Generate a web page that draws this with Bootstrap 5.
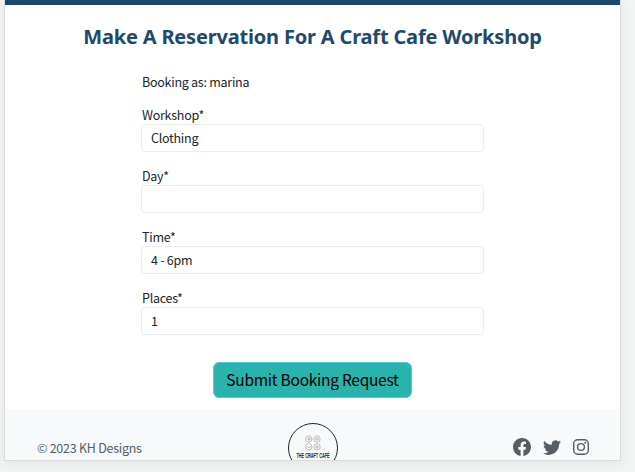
<!DOCTYPE html>
<html lang="en">
<head>
<meta charset="utf-8">
<meta name="viewport" content="width=device-width, initial-scale=1">
<title>Craft Cafe Reservation</title>
<link href="https://cdn.jsdelivr.net/npm/bootstrap@5.3.0/dist/css/bootstrap.min.css" rel="stylesheet">
<style>
body{height:472px;background:#f3f4f4;font-family:"Noto Sans CJK SC",sans-serif;font-size:12.5px;letter-spacing:-.26px;line-height:20px;color:#212529;padding:0 14px 11px 4px}
.page-frame{height:461px;background:#fff;border:1px solid #d9dbdc;border-top:0;box-shadow:0 2px 14px rgba(0,0,0,.07)}
.top-strip{height:5px;background:#1d4a6b}
.page-title{font-family:"Noto Sans",sans-serif;font-size:20px;line-height:28px;font-weight:700;color:#1d4a6b;margin:18px 0 0;white-space:nowrap;letter-spacing:-.18px}
.booking-form{width:343px;margin:21px 0 0 136px}
.booking-as{margin-bottom:13px;padding-left:1px}
.booking-form .form-label{margin:0;line-height:19px;height:19px;padding-left:1px}
.booking-form .form-control{height:28px;font-size:12.5px;letter-spacing:-.26px;line-height:18px;padding:3px 9px 5px;border-color:#ebecef;border-radius:4px;color:#212529}
.field-row{margin-bottom:14px}
.submit-row{padding-top:13px}
.btn-submit{--bs-btn-bg:#28b3ac;--bs-btn-color:#000;--bs-btn-border-color:#4fcfdc;--bs-btn-hover-bg:#239e98;font-size:15.5px;letter-spacing:-.27px;line-height:22px;width:199px;height:36px;padding:5px 0 7px;border-radius:6px;white-space:nowrap}
.site-footer{height:51px;background:#f8f9fb;color:#565e64;padding:0 31px 0 32px}
.footer-side{padding-top:29px;flex:1 1 0}
.footer-icons{gap:12px}
.footer-logo{margin:13px 0 0}
</style>
<script src="https://cdn.jsdelivr.net/npm/bootstrap@5.3.0/dist/js/bootstrap.bundle.min.js"></script>
</head>
<body class="overflow-hidden">
<div class="page-frame d-flex flex-column overflow-hidden">
  <div class="top-strip flex-shrink-0"></div>
  <h1 class="page-title text-center">Make A Reservation For A Craft Cafe Workshop</h1>
  <form class="booking-form">
    <div class="booking-as">Booking as: marina</div>
    <div class="field-row"><label class="form-label d-block" for="workshop">Workshop*</label><input class="form-control" id="workshop" value="Clothing"></div>
    <div class="field-row"><label class="form-label d-block" for="day">Day*</label><input class="form-control" id="day"></div>
    <div class="field-row"><label class="form-label d-block" for="time">Time*</label><input class="form-control" id="time" value="4 - 6pm"></div>
    <div class="field-row"><label class="form-label d-block" for="places">Places*</label><input class="form-control" id="places" value="1"></div>
    <div class="submit-row d-flex justify-content-center"><button type="button" class="btn btn-submit">Submit Booking Request</button></div>
  </form>
  <footer class="site-footer d-flex mt-auto flex-shrink-0 overflow-hidden">
    <div class="footer-side">© 2023 KH Designs</div>
    <svg width="52" height="52" viewBox="0 0 52 52" class="footer-logo flex-shrink-0" fill="none" stroke="#222">
      <circle cx="26" cy="26" r="24.5" stroke-width="1"/>
      <g stroke="#b4b4b4" stroke-width=".9"><circle cx="21.7" cy="17" r="3.2"/><circle cx="30" cy="17" r="3.2"/><circle cx="21.7" cy="24.8" r="3.2"/><circle cx="30" cy="24.8" r="3.2"/><path d="M20 17h4M22 15v4M28 17h4M30 15v4M20 24l2 2 2-2M28 25h4M30 23v4"/></g>
      <text x="9.5" y="35.5" textLength="33" lengthAdjust="spacingAndGlyphs" font-family="Liberation Sans,sans-serif" font-size="6.8" font-weight="700" letter-spacing="0" fill="#222" stroke="none">THE CRAFT CAFÉ</text>
    </svg>
    <div class="footer-side footer-icons d-flex justify-content-end">
      <svg width="18" height="18" viewBox="0 0 16 16" fill="currentColor"><path d="M16 8.049c0-4.446-3.582-8.05-8-8.05C3.58 0-.002 3.603-.002 8.05c0 4.017 2.926 7.347 6.75 7.951v-5.625h-2.03V8.05H6.75V6.275c0-2.017 1.195-3.131 3.022-3.131.876 0 1.791.157 1.791.157v1.98h-1.009c-.993 0-1.303.621-1.303 1.258v1.51h2.218l-.354 2.326H9.25V16c3.824-.604 6.75-3.934 6.75-7.951z"/></svg>
      <svg width="18" height="18" viewBox="0 0 16 16" fill="currentColor"><path d="M5.026 15c6.038 0 9.341-5.003 9.341-9.334 0-.14 0-.282-.006-.422A6.685 6.685 0 0 0 16 3.542a6.658 6.658 0 0 1-1.889.518 3.301 3.301 0 0 0 1.447-1.817 6.533 6.533 0 0 1-2.087.793A3.286 3.286 0 0 0 7.875 6.03a9.325 9.325 0 0 1-6.767-3.429 3.289 3.289 0 0 0 1.018 4.382A3.323 3.323 0 0 1 .64 6.575v.045a3.288 3.288 0 0 0 2.632 3.218 3.203 3.203 0 0 1-.865.115 3.23 3.23 0 0 1-.614-.057 3.283 3.283 0 0 0 3.067 2.277A6.588 6.588 0 0 1 .78 13.58a6.32 6.32 0 0 1-.78-.045A9.344 9.344 0 0 0 5.026 15z"/></svg>
      <svg width="16" height="18" viewBox="0 0 16 16" fill="none" stroke="currentColor" stroke-width="1.4"><rect x=".7" y=".7" width="14.6" height="14.6" rx="4"/><circle cx="8" cy="8" r="3.4"/><circle cx="12.3" cy="3.7" r="1" fill="currentColor" stroke="none"/></svg>
    </div>
  </footer>
</div>
</body>
</html>
